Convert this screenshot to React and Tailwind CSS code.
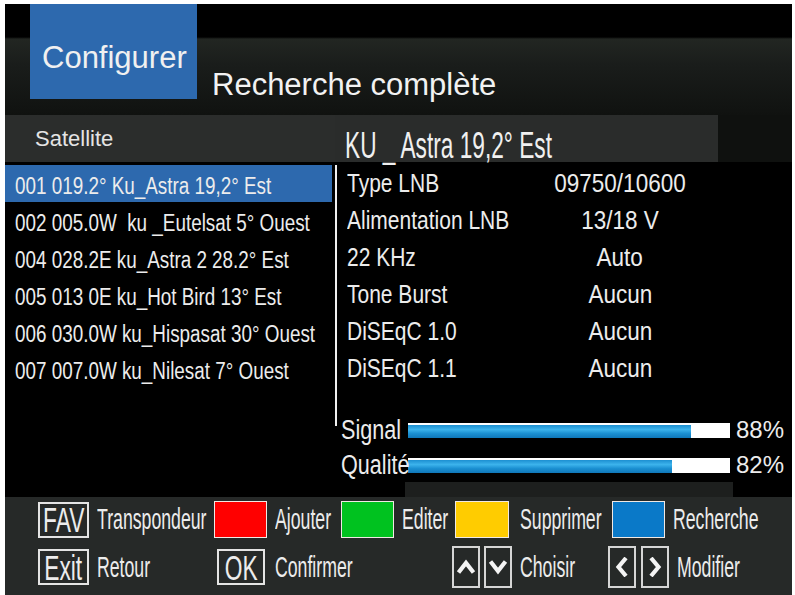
import React from "react";

const FONT = { fontFamily: '"Liberation Sans", Arial, sans-serif' };

const SATS = [
  "001 019.2° Ku_Astra 19,2° Est",
  "002 005.0W  ku _Eutelsat 5° Ouest",
  "004 028.2E ku_Astra 2 28.2° Est",
  "005 013 0E ku_Hot Bird 13° Est",
  "006 030.0W ku_Hispasat 30° Ouest",
  "007 007.0W ku_Nilesat 7° Ouest",
];

const PARAMS = [
  ["Type LNB", "09750/10600"],
  ["Alimentation LNB", "13/18 V"],
  ["22 KHz", "Auto"],
  ["Tone Burst", "Aucun"],
  ["DiSEqC 1.0", "Aucun"],
  ["DiSEqC 1.1", "Aucun"],
];

// the receiver font is a narrow one, so squeeze Liberation Sans horizontally
const T = ({ s = "", o = "origin-left", children }) => (
  <span className={`inline-block whitespace-pre ${o} ${s}`}>{children}</span>
);

// signal / quality bar
const Bar = ({ label, pct, cls }) => (
  <div className={`flex h-[34px] items-center ${cls}`}>
    <span className="w-[73px] shrink-0 pl-[6px] text-[27px] leading-none text-[#ececec]">
      <T s="scale-x-[0.8]">{label}</T>
    </span>
    <div className="h-[15px] w-[322px] shrink-0 border-t-2 border-white bg-white">
      <div
        className="h-full bg-[linear-gradient(to_bottom,#1c8fd1_0%,#3cb3ec_35%,#1b90d2_65%,#0f77b9_100%)]"
        style={{ width: `${pct}%` }}
      />
    </div>
    <span className="shrink-0 pl-[6px] text-[24px] leading-none text-[#ececec]">{pct}%</span>
  </div>
);

const KeyBox = ({ children, w, h = "h-[36px]" }) => (
  <div
    className={`flex shrink-0 items-center justify-center overflow-hidden border-2 border-[#e4e4e4] text-[35px] leading-none text-[#ececec] ${w} ${h}`}
  >
    <T s="scale-x-[0.65]" o="origin-center">{children}</T>
  </div>
);

const ColorBox = ({ cls }) => (
  <div className={`h-[37px] w-[53px] shrink-0 border border-[#f1e9e4] ${cls}`} />
);

const Label = ({ w = "", ml = "ml-[8px]", children }) => (
  <span className={`shrink-0 ${ml} ${w}`}>
    <T s="scale-x-[0.61]">{children}</T>
  </span>
);

const Arrow = ({ d, sw = 4.2 }) => (
  <div className="flex h-[42px] w-[28px] shrink-0 items-center justify-center border-2 border-[#d6d6d6]">
    <svg width="20" height="20" viewBox="0 0 20 20">
      <polyline points={d} fill="none" stroke="#f4f4f4" strokeWidth={sw} strokeLinejoin="miter" />
    </svg>
  </div>
);

const App = () => {
  return (
    <div className="h-[595px] w-[795px] overflow-hidden bg-white pl-[5px] pr-[3px] pt-[4px]" style={FONT}>
      <div className="flex h-[591px] flex-col bg-black">
        {/* title area */}
        <div className="flex h-[111px] bg-[linear-gradient(to_bottom,#000_0px,#000_33px,#222622_35px,#1a1d1b_60px,#101210_111px)]">
          <div className="ml-[25px] flex h-[95px] w-[167px] flex-col bg-[#2d69ae] pl-[12px] pt-[38px]">
            <span className="text-[31px] leading-none text-[#f0f0f0]">Configurer</span>
          </div>
          <div className="ml-[15px] mt-[65px] self-start">
            <span className="text-[31px] leading-none text-[#f2f2f2]">Recherche complète</span>
          </div>
        </div>

        {/* header bar */}
        <div className="flex h-[47px]">
          <div className="flex w-[330px] items-center bg-[#2b2d2c] pl-[30px]">
            <span className="text-[22px] leading-none text-[#e4e4e4]">Satellite</span>
          </div>
          <div className="flex w-[383px] items-center bg-[#2a2c2b] pl-[10px] pt-[14px]">
            <span className="text-[36px] leading-none text-[#f0f0f0]">
              <T s="scale-x-[0.63]">KU _ Astra 19,2° Est</T>
            </span>
          </div>
          <div className="flex-1 bg-[#0f110f]" />
        </div>

        {/* body */}
        <div className="flex h-[335px]">
          <div className="w-[327px] pt-[3px]">
            {SATS.map((s, i) => (
              <div
                key={s}
                className={`flex h-[37px] items-center pl-[10px] pt-[6px] text-[23px] leading-none text-[#ececec] ${i === 0 ? "bg-[#2d69ae]" : ""}`}
              >
                <T s="scale-x-[0.82]">{s}</T>
              </div>
            ))}
          </div>
          <div className="ml-[3px] flex-1 pt-[3px]">
            <div className="h-[261px] border-l-2 border-[#f0f0f0]">
              {PARAMS.map(([k, v]) => (
                <div key={k} className="flex h-[37px] items-center text-[25px] leading-none text-[#ececec]">
                  <span className="w-[193px] shrink-0 pl-[10px]">
                    <T s="scale-x-[0.84]">{k}</T>
                  </span>
                  <span className="w-[180px] shrink-0 text-center">
                    <T s="scale-x-[0.9]" o="origin-center">{v}</T>
                  </span>
                </div>
              ))}
            </div>
            <Bar label="Signal" pct={88} cls="mt-[-13px]" />
            <Bar label="Qualité" pct={82} cls="mt-[1px]" />
            <div className="ml-[70px] h-[26px] w-[328px] bg-[#1d1f1e]" />
          </div>
        </div>

        {/* footer */}
        <div className="flex flex-1 flex-col bg-[#262928] pl-[33px] pt-[4px] text-[29px] leading-none text-[#ececec]">
          <div className="flex h-[37px] items-center">
            <KeyBox w="w-[51px]">FAV</KeyBox>
            <Label w="w-[117px]">Transpondeur</Label>
            <ColorBox cls="bg-[#ff0000]" />
            <Label w="w-[66px]">Ajouter</Label>
            <ColorBox cls="bg-[#00c21f]" />
            <Label w="w-[53px]">Editer</Label>
            <ColorBox cls="w-[54px] bg-[#ffcc00]" />
            <Label w="w-[92px]" ml="ml-[11px]">Supprimer</Label>
            <ColorBox cls="bg-[#0a79c8]" />
            <Label>Recherche</Label>
          </div>
          <div className="mt-[8px] flex h-[42px] items-center">
            <KeyBox w="w-[51px]">Exit</KeyBox>
            <Label w="w-[120px]">Retour</Label>
            <KeyBox w="w-[48px]">OK</KeyBox>
            <Label w="w-[177px]" ml="ml-[10px]">Confirmer</Label>
            <Arrow d="2.5,15.5 10,6 17.5,15.5" />
            <div className="w-[4px] shrink-0" />
            <Arrow d="2.5,4.5 10,14 17.5,4.5" />
            <Label w="w-[88px]">Choisir</Label>
            <Arrow d="14,1 6.5,10 14,19" />
            <div className="w-[5px] shrink-0" />
            <Arrow d="6,1 13.5,10 6,19" />
            <Label>Modifier</Label>
          </div>
        </div>
      </div>
    </div>
  );
};

export default App;
